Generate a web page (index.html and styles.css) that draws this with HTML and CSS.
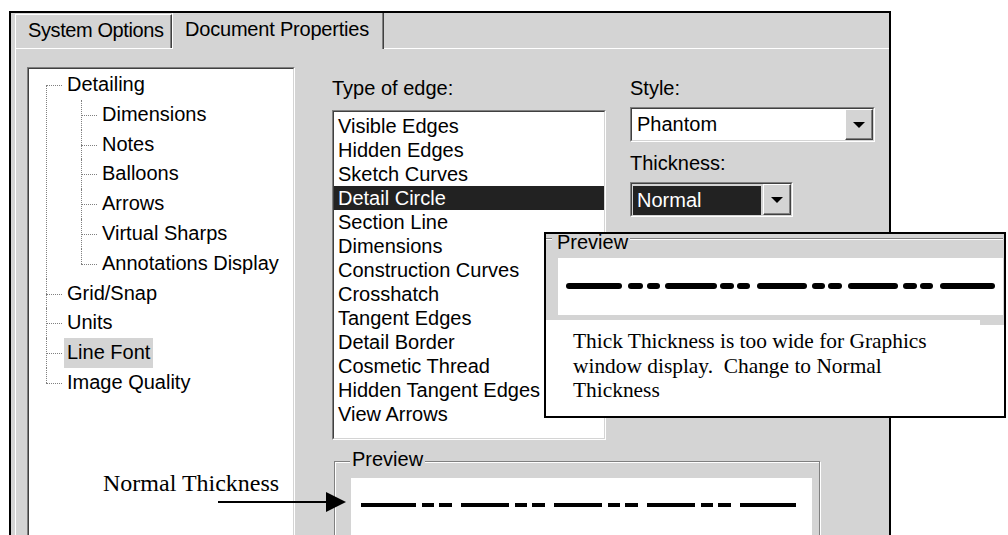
FILE: index.html
```html
<!DOCTYPE html>
<html>
<head>
<meta charset="utf-8">
<link rel="stylesheet" href="styles.css">
</head>
<body>
<div class="stage">
  <div class="dialog">
    <div class="tabs">
      <div class="tab tab-sys">System Options</div>
      <div class="tab tab-doc">Document Properties</div>
    </div>
    <div class="page">
      <div class="tree-box sunken">
        <div class="sunken-in fill">
          <ul class="tree">
            <li><span>Detailing</span>
              <ul>
                <li><span>Dimensions</span></li>
                <li><span>Notes</span></li>
                <li><span>Balloons</span></li>
                <li><span>Arrows</span></li>
                <li><span>Virtual Sharps</span></li>
                <li><span>Annotations Display</span></li>
              </ul>
            </li>
            <li><span>Grid/Snap</span></li>
            <li><span>Units</span></li>
            <li><span class="sel">Line Font</span></li>
            <li><span>Image Quality</span></li>
          </ul>
        </div>
      </div>
      <div class="settings">
        <div class="top-row">
          <div class="col-edge">
            <div class="label">Type of edge:</div>
            <div class="listbox sunken">
              <div class="sunken-in fill white">
                <ul class="list">
                  <li>Visible Edges</li>
                  <li>Hidden Edges</li>
                  <li>Sketch Curves</li>
                  <li class="sel">Detail Circle</li>
                  <li>Section Line</li>
                  <li>Dimensions</li>
                  <li>Construction Curves</li>
                  <li>Crosshatch</li>
                  <li>Tangent Edges</li>
                  <li>Detail Border</li>
                  <li>Cosmetic Thread</li>
                  <li>Hidden Tangent Edges</li>
                  <li>View Arrows</li>
                </ul>
              </div>
            </div>
          </div>
          <div class="col-style">
            <div class="label">Style:</div>
            <div class="combo combo-style sunken">
              <div class="sunken-in combo-in">
                <span class="field">Phantom</span>
                <span class="btn"><i class="tri"></i></span>
              </div>
            </div>
            <div class="label label-thick">Thickness:</div>
            <div class="combo combo-thick sunken">
              <div class="sunken-in combo-in">
                <span class="field field-sel">Normal</span>
                <span class="btn"><i class="tri"></i></span>
              </div>
            </div>
          </div>
        </div>
        <div class="groupbox">
          <div class="legend">Preview</div>
          <div class="preview-area">
            <svg class="dash-normal" width="460" height="60" viewBox="0 0 460 60">
              <g stroke="#000" stroke-width="4" stroke-linecap="butt">
                <line x1="10" y1="27" x2="65" y2="27"/>
                <line x1="71" y1="27" x2="83" y2="27"/>
                <line x1="88" y1="27" x2="101" y2="27"/>
                <line x1="110" y1="27" x2="158" y2="27"/>
                <line x1="164" y1="27" x2="176" y2="27"/>
                <line x1="181" y1="27" x2="194" y2="27"/>
                <line x1="203" y1="27" x2="251" y2="27"/>
                <line x1="257" y1="27" x2="269" y2="27"/>
                <line x1="274" y1="27" x2="287" y2="27"/>
                <line x1="296" y1="27" x2="344" y2="27"/>
                <line x1="350" y1="27" x2="362" y2="27"/>
                <line x1="367" y1="27" x2="380" y2="27"/>
                <line x1="389" y1="27" x2="445" y2="27"/>
              </g>
            </svg>
          </div>
        </div>
      </div>
    </div>
  </div>

  <div class="callout">
    <div class="clip">
      <div class="clip-head">
        <span class="etch etch-a"></span>
        <span class="clip-legend">Preview</span>
        <span class="etch etch-b"></span>
      </div>
      <div class="clip-view">
        <svg width="445" height="57" viewBox="0 0 445 57">
          <g stroke="#000" stroke-width="6" stroke-linecap="round">
            <line x1="11" y1="28" x2="61" y2="28"/>
            <line x1="73" y1="28" x2="82" y2="28"/>
            <line x1="92" y1="28" x2="99" y2="28"/>
            <line x1="110" y1="28" x2="156" y2="28"/>
            <line x1="165" y1="28" x2="173" y2="28"/>
            <line x1="182" y1="28" x2="189" y2="28"/>
            <line x1="202" y1="28" x2="246" y2="28"/>
            <line x1="257" y1="28" x2="264" y2="28"/>
            <line x1="273" y1="28" x2="281" y2="28"/>
            <line x1="293" y1="28" x2="337" y2="28"/>
            <line x1="348" y1="28" x2="356" y2="28"/>
            <line x1="365" y1="28" x2="372" y2="28"/>
            <line x1="385" y1="28" x2="434" y2="28"/>
          </g>
        </svg>
      </div>
    </div>
    <div class="note-row">
      <p class="note">Thick Thickness is too wide for Graphics<br>window display.&nbsp; Change to Normal<br>Thickness</p>
      <span class="notch"></span>
    </div>
  </div>

  <div class="annot">Normal Thickness</div>
  <svg class="arrow" width="132" height="24" viewBox="0 0 132 24">
    <line x1="2" y1="12" x2="114" y2="12" stroke="#000" stroke-width="2"/>
    <polygon points="110,2 130,12 110,22" fill="#000"/>
  </svg>
</div>
</body>
</html>
```

FILE: styles.css
```css
* { box-sizing: border-box; }

html, body {
  margin: 0;
  padding: 0;
  background: #fff;
}

.stage {
  position: relative;
  width: 1008px;
  height: 535px;
  overflow: hidden;
  font-family: "Liberation Sans", Arial, sans-serif;
  font-size: 20px;
  color: #000;
}

.dialog {
  margin: 11px 0 0 9px;
  width: 882px;
  height: 540px;
  background: #d4d4d4;
  border: 2px solid #000;
  border-bottom: none;
  display: flex;
  flex-direction: column;
}

/* tabs */
.tabs {
  display: flex;
  align-items: flex-end;
  height: 35px;
  padding-left: 4px;
  flex: none;
}

.tab {
  height: 34px;
  padding: 4px 0 0 12px;
  line-height: 23px;
  border-left: 1px solid #fff;
  border-top: 1px solid #fff;
  border-right: 1px solid #404040;
  box-shadow: inset -1px 0 0 #808080;
  white-space: nowrap;
  background: #d4d4d4;
  letter-spacing: -0.4px;
}

.tab-sys { width: 157px; }

.tab-doc {
  width: 212px;
  height: 36px;
  margin-bottom: -1px;
  border-top: none;
  padding-top: 5px;
  position: relative;
  z-index: 1;
  letter-spacing: -0.2px;
}

/* page */
.page {
  flex: 1;
  margin-left: 4px;
  border-left: 1px solid #fff;
  border-top: 1px solid #fff;
  display: flex;
  align-items: flex-start;
  padding: 18px 0 0 11px;
}

.sunken {
  border: 1px solid;
  border-color: #808080 #fff #fff #808080;
}

.sunken-in {
  border: 1px solid;
  border-color: #404040 #d4d4d4 #d4d4d4 #404040;
}

.fill { height: 100%; }
.white { background: #fff; }

/* tree */
.tree-box {
  width: 268px;
  height: 500px;
  background: #fff;
  flex: none;
}

.tree, .tree ul {
  list-style: none;
  margin: 0;
}

.tree {
  padding: 1px 0 0 17px;
}

.tree ul {
  padding: 0 0 0 17px;
}

.tree li {
  position: relative;
  padding-left: 18px;
  line-height: 29.8px;
  white-space: nowrap;
}

.tree li > span {
  display: inline-block;
  padding: 0 3px;
}

.tree li > span.sel {
  background: #d4d4d4;
}

.tree li::before {
  content: "";
  position: absolute;
  left: 0;
  top: 15px;
  width: 16px;
  border-top: 1px dotted #808080;
}

.tree li::after {
  content: "";
  position: absolute;
  left: 0;
  top: 0;
  bottom: 0;
  border-left: 1px dotted #808080;
}

.tree > li:first-child::after { top: 15px; }

.tree li:last-child::after {
  bottom: auto;
  height: 15px;
}

/* settings */
.settings {
  margin-left: 37px;
  padding-top: 10px;
  display: flex;
  flex-direction: column;
}

.top-row {
  display: flex;
  align-items: flex-start;
}

.col-edge { width: 274px; }

.label {
  line-height: 23px;
  height: 23px;
  white-space: nowrap;
}

.listbox {
  margin-top: 10px;
  height: 330px;
}

.list {
  list-style: none;
  margin: 0;
  padding: 2px 0 0 0;
  line-height: 24px;
}

.list li {
  padding-left: 4px;
  white-space: nowrap;
}

.list li.sel {
  background: #222;
  color: #fff;
}

.col-style {
  margin-left: 24px;
  width: 245px;
}

.combo {
  margin-top: 7px;
  height: 35px;
}

.combo-thick { width: 163px; }

.combo-in {
  display: flex;
  height: 100%;
  background: #fff;
}

.field {
  flex: 1;
  line-height: 31px;
  padding-left: 5px;
  white-space: nowrap;
}

.field-sel {
  background: #222;
  color: #fff;
  margin: 2px 2px 0 1px;
  line-height: 29px;
  padding-left: 4px;
  height: 29px;
}

.combo-thick .combo-in { background: #d4d4d4; }

.btn {
  width: 28px;
  flex: none;
  background: #d4d4d4;
  border: 1px solid;
  border-color: #fff #404040 #404040 #fff;
  box-shadow: inset -1px -1px 0 #808080;
  display: flex;
  align-items: center;
  justify-content: center;
}

.tri {
  display: block;
  width: 0;
  height: 0;
  border-left: 6px solid transparent;
  border-right: 6px solid transparent;
  border-top: 6px solid #000;
  margin-top: 1px;
}

.label-thick { margin-top: 10px; }

/* preview groupbox */
.groupbox {
  margin: 21px 0 0 2px;
  width: 486px;
  height: 120px;
  border: 1px solid #808080;
  box-shadow: inset 1px 1px 0 #fff, 1px 1px 0 #fff;
  display: flex;
  flex-direction: column;
  padding: 0 7px 0 16px;
}

.legend {
  align-self: flex-start;
  margin: -14px 0 0 -1px;
  padding: 0 2px;
  line-height: 23px;
  background: #d4d4d4;
}

.preview-area {
  margin-top: 7px;
  flex: 1;
  background: #fff;
}

.dash-normal { display: block; }

/* callout */
.callout {
  position: absolute;
  left: 544px;
  top: 232px;
  width: 462px;
  height: 186px;
  border: 2px solid #000;
  background: #fff;
  display: flex;
  flex-direction: column;
}

.clip {
  height: 86px;
  flex: none;
  background: #d4d4d4;
  padding: 0 1px 0 12px;
  display: flex;
  flex-direction: column;
}

.clip-head {
  display: flex;
  height: 24px;
  margin-left: -12px;
  flex: none;
}

.etch {
  height: 2px;
  margin-top: 4px;
  border-top: 1px solid #808080;
  border-bottom: 1px solid #fff;
}

.etch-a { width: 6px; }
.etch-b { flex: 1; margin-left: 2px; }

.clip-legend {
  margin-left: 5px;
  line-height: 16px;
  height: 16px;
}

.clip-view {
  height: 57px;
  background: #fff;
}

.clip-view svg { display: block; }

.note-row {
  flex: 1;
  display: flex;
  align-items: flex-start;
}

.note {
  margin: 0;
  width: 434px;
  flex: none;
  padding: 9px 0 0 27px;
  font-family: "Liberation Serif", "Times New Roman", serif;
  font-size: 21.4px;
  line-height: 24.5px;
  white-space: nowrap;
}

.notch {
  flex: 1;
  height: 5px;
  background: #d4d4d4;
}

/* annotation */
.annot {
  position: absolute;
  left: 103px;
  top: 469px;
  font-family: "Liberation Serif", "Times New Roman", serif;
  font-size: 24px;
  line-height: 28px;
  white-space: nowrap;
}

.arrow {
  position: absolute;
  left: 216px;
  top: 490px;
  display: block;
}
```
